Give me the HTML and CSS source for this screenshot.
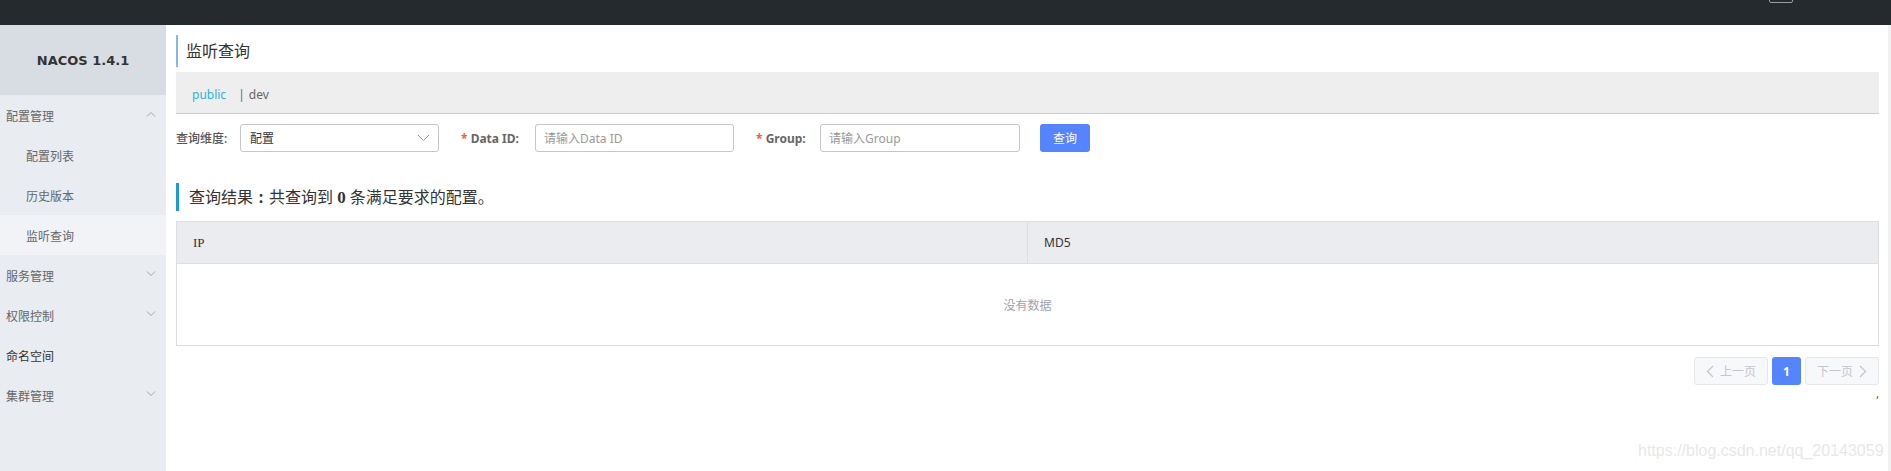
FILE: index.html
```html
<!DOCTYPE html>
<html lang="zh-CN">
<head>
    <meta charset="UTF-8">
    <meta name="viewport" content="width=device-width, initial-scale=1.0">
    <title>NACOS</title>
    <link rel="stylesheet" href="styles.css">
</head>
<body>
    <div class="topbar">
        <span class="top-box"></span>
    </div>

    <div class="layout">
        <aside class="sidebar">
            <div class="logo">NACOS 1.4.1</div>
            <ul class="menu">
                <li class="menu-item">配置管理
                    <svg class="arrow" width="10" height="6" viewBox="0 0 10 6"><path d="M1 5.5 L5 1.5 L9 5.5" fill="none" stroke="#a3a6ad" stroke-width="1"/></svg>
                </li>
                <li class="menu-item sub">配置列表</li>
                <li class="menu-item sub">历史版本</li>
                <li class="menu-item sub active">监听查询</li>
                <li class="menu-item">服务管理
                    <svg class="arrow" width="10" height="6" viewBox="0 0 10 6"><path d="M1 0.5 L5 4.5 L9 0.5" fill="none" stroke="#a3a6ad" stroke-width="1"/></svg>
                </li>
                <li class="menu-item">权限控制
                    <svg class="arrow" width="10" height="6" viewBox="0 0 10 6"><path d="M1 0.5 L5 4.5 L9 0.5" fill="none" stroke="#a3a6ad" stroke-width="1"/></svg>
                </li>
                <li class="menu-item dark">命名空间</li>
                <li class="menu-item">集群管理
                    <svg class="arrow" width="10" height="6" viewBox="0 0 10 6"><path d="M1 0.5 L5 4.5 L9 0.5" fill="none" stroke="#a3a6ad" stroke-width="1"/></svg>
                </li>
            </ul>
        </aside>

        <main class="content">
            <h1 class="page-title">监听查询</h1>

            <div class="ns-bar">
                <span class="ns current">public</span>
                <span class="ns-sep">|</span>
                <span class="ns">dev</span>
            </div>

            <form class="query-form">
                <label class="form-label plain">查询维度:</label>
                <div class="select">
                    <span>配置</span>
                    <svg width="13" height="8" viewBox="0 0 13 8"><path d="M1 1 L6.5 6.5 L12 1" fill="none" stroke="#999" stroke-width="1"/></svg>
                </div>

                <label class="form-label label-id"><span class="star">*</span> Data ID:</label>
                <input class="text-input" type="text" placeholder="请输入Data ID">

                <label class="form-label label-group"><span class="star">*</span> Group:</label>
                <input class="text-input wide" type="text" placeholder="请输入Group">

                <button type="button" class="btn-primary">查询</button>
            </form>

            <h2 class="result-title">查询结果<span class="colon">:</span>共查询到 <strong>0</strong> 条满足要求的配置。</h2>

            <div class="table">
                <div class="table-head">
                    <div class="th serif">IP</div>
                    <div class="th">MD5</div>
                </div>
                <div class="empty">没有数据</div>
            </div>

            <div class="pagination">
                <button type="button" class="page-btn" disabled>
                    <svg width="8" height="13" viewBox="0 0 8 13"><path d="M7 1 L1.5 6.5 L7 12" fill="none" stroke="#c4c6cf" stroke-width="1.3"/></svg>
                    上一页
                </button>
                <button type="button" class="page-num">1</button>
                <button type="button" class="page-btn" disabled>
                    下一页
                    <svg width="8" height="13" viewBox="0 0 8 13"><path d="M1 1 L6.5 6.5 L1 12" fill="none" stroke="#c4c6cf" stroke-width="1.3"/></svg>
                </button>
            </div>
            <div class="tick">,</div>
        </main>
    </div>

    <div class="watermark">https://blog.csdn.net/qq_20143059</div>
</body>
</html>
```
FILE: styles.css
```css
body {
    margin: 0;
    height: 471px;
    overflow: hidden;
    font-family: "Noto Sans", "Noto Sans CJK SC", sans-serif;
    font-size: 12px;
    color: #333;
    background-color: #fff;
}

.topbar {
    height: 25px;
    background-color: #252a2f;
    position: relative;
}

.top-box {
    position: absolute;
    left: 1769px;
    top: -3px;
    width: 22px;
    height: 4px;
    border: 1px solid #9a9ea3;
    border-radius: 2px;
}

.layout {
    display: flex;
    height: 446px;
}

.sidebar {
    width: 166px;
    flex-shrink: 0;
    background-color: #e9ecf1;
}

.logo {
    height: 70px;
    display: flex;
    align-items: center;
    justify-content: center;
    background-color: #d8dde4;
    font-family: "DejaVu Sans", sans-serif;
    font-weight: bold;
    font-size: 13px;
    color: #333;
}

.menu {
    list-style: none;
    margin: 0;
    padding: 0;
}

.menu-item {
    height: 38px;
    padding-top: 2px;
    line-height: 40px;
    padding-left: 6px;
    color: #666;
    position: relative;
}

.menu-item.sub {
    padding-left: 26px;
}

.menu-item.active {
    background-color: #f2f3f7;
}

.menu-item.dark {
    color: #333;
}

.arrow {
    position: absolute;
    right: 10px;
    top: 16px;
}

.content {
    flex: 1;
    padding: 10px 9px 0 10px;
    border-right: 3px solid #f1f1f1;
    position: relative;
}

.page-title {
    margin: 0;
    height: 32px;
    line-height: 32px;
    border-left: 2px solid #88b7e0;
    padding-left: 8px;
    font-size: 16px;
    font-weight: normal;
    color: #333;
}

.ns-bar {
    margin-top: 5px;
    height: 42px;
    border-bottom: 1px solid #ccc;
    background-color: #eee;
    display: flex;
    align-items: center;
    padding: 4px 0 0 16px;
    box-sizing: border-box;
    color: #666;
}

.ns.current {
    color: #2bb4dc;
}

.ns-sep {
    margin: 0 4px 0 12px;
}

.query-form {
    margin-top: 10px;
    display: flex;
    align-items: center;
    height: 28px;
}

.form-label {
    font-weight: bold;
    color: #666;
    margin-right: 12px;
    white-space: nowrap;
}

.form-label.plain {
    width: 52px;
    font-weight: 500;
    color: #555;
}

.form-label.label-id {
    width: 62px;
}

.form-label.label-group {
    width: 52px;
}

.star {
    color: #fa5a3c;
}

.select {
    width: 199px;
    height: 28px;
    box-sizing: border-box;
    border: 1px solid #c4c6cf;
    border-radius: 3px;
    display: flex;
    align-items: center;
    justify-content: space-between;
    padding: 0 8px 0 9px;
    margin-right: 22px;
    color: #333;
}

.text-input {
    width: 199px;
    height: 28px;
    box-sizing: border-box;
    border: 1px solid #c4c6cf;
    border-radius: 3px;
    padding: 0 8px;
    margin: 0 22px 0 0;
    font-family: inherit;
    font-size: 12px;
    outline: none;
}

.text-input.wide {
    width: 200px;
    margin-right: 20px;
}

.text-input::placeholder {
    color: #999;
}

.btn-primary {
    width: 50px;
    height: 28px;
    border: none;
    border-radius: 3px;
    background-color: #5584ff;
    color: #fff;
    font-family: inherit;
    font-size: 12px;
    padding: 0;
}

.result-title {
    margin: 31px 0 0 0;
    height: 28px;
    line-height: 28px;
    border-left: 3px solid #1a9bd7;
    padding-left: 10px;
    font-size: 16px;
    font-weight: normal;
    color: #333;
}

.result-title .colon {
    display: inline-block;
    width: 16px;
    text-align: center;
    font-weight: bold;
}

.result-title strong {
    font-family: "Liberation Serif", serif;
    font-size: 17px;
}

.table {
    margin-top: 10px;
    border: 1px solid #dcdee3;
}

.table-head {
    display: grid;
    grid-template-columns: 850px 1fr;
    height: 41px;
    background-color: #ebecf0;
    border-bottom: 1px solid #dcdee3;
}

.th {
    line-height: 41px;
    padding-left: 16px;
    color: #333;
}

.th.serif {
    font-family: "Liberation Serif", serif;
    font-size: 13px;
}

.th + .th {
    border-left: 1px solid #dcdee3;
}

.empty {
    height: 81px;
    line-height: 84px;
    overflow: hidden;
    text-align: center;
    color: #a0a2ad;
}

.pagination {
    margin-top: 11px;
    display: flex;
    justify-content: flex-end;
    gap: 4px;
}

.page-btn {
    width: 74px;
    height: 28px;
    border: 1px solid #e6e7eb;
    border-radius: 3px;
    background-color: #f7f8fa;
    color: #c4c6cf;
    font-family: inherit;
    font-size: 12px;
    display: flex;
    align-items: center;
    justify-content: center;
    gap: 6px;
    padding: 0;
}

.page-num {
    width: 29px;
    height: 28px;
    border: none;
    border-radius: 3px;
    background-color: #5584ff;
    color: #fff;
    font-family: inherit;
    font-size: 12px;
    font-weight: bold;
    padding: 0;
}

.tick {
    text-align: right;
    line-height: 14px;
    margin-top: 2px;
    font-size: 10px;
    color: #333;
}

.watermark {
    position: absolute;
    left: 1638px;
    top: 442px;
    font-family: "Liberation Sans", Arial, sans-serif;
    font-size: 16px;
    color: #e8e8e8;
}
```
